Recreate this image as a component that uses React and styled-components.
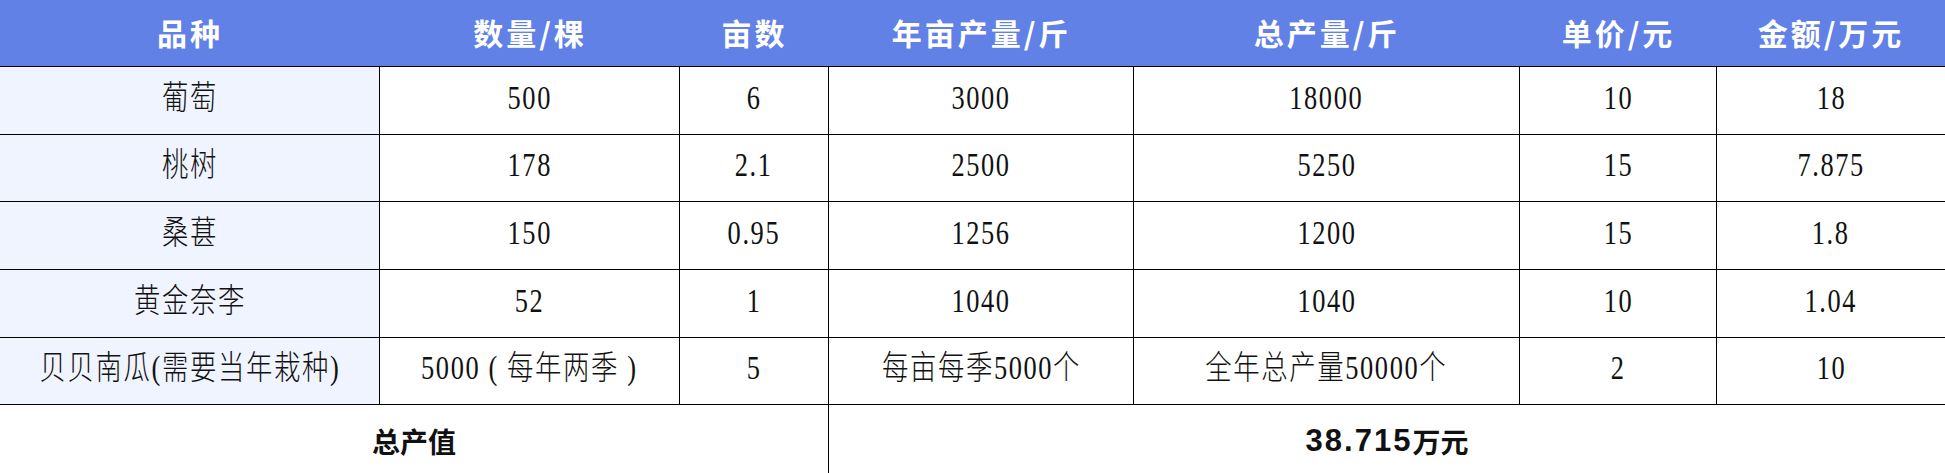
import React from "react";
import styled, { createGlobalStyle } from "styled-components";

const GlobalStyle = createGlobalStyle`
  html, body {
    margin: 0;
    padding: 0;
    background: #ffffff;
  }
`;

const headers = ["品种", "数量/棵", "亩数", "年亩产量/斤", "总产量/斤", "单价/元", "金额/万元"];

const rows = [
  ["葡萄", "500", "6", "3000", "18000", "10", "18"],
  ["桃树", "178", "2.1", "2500", "5250", "15", "7.875"],
  ["桑葚", "150", "0.95", "1256", "1200", "15", "1.8"],
  ["黄金奈李", "52", "1", "1040", "1040", "10", "1.04"],
  ["贝贝南瓜(需要当年栽种)", "5000 ( 每年两季 )", "5", "每亩每季5000个", "全年总产量50000个", "2", "10"],
];

function App() {
  return (
    <>
      <GlobalStyle />
      <Table>
        {headers.map((h) => (
          <HeadCell key={h}>{h}</HeadCell>
        ))}
        {rows.map((row, r) =>
          row.map((v, c) => (
            <Cell key={r + "-" + c} $first={c === 0} $last={c === row.length - 1}>
              <CellText>{v}</CellText>
            </Cell>
          ))
        )}
        <FootCell $span={3} $divider>
          总产值
        </FootCell>
        <FootCell $span={4}>
          <FootNumber>38.715</FootNumber>万元
        </FootCell>
      </Table>
    </>
  );
}

const Table = styled.div`
  width: 1945px;
  height: 473px;
  display: grid;
  grid-template-columns: 380px 300px 149px 305px 386px 197px 228px;
  grid-template-rows: 67px repeat(6, 1fr);
  box-sizing: border-box;
`;

const HeadCell = styled.div`
  background: #6181e7;
  color: #ffffff;
  border-bottom: 1px solid #000;
  box-sizing: border-box;
  display: flex;
  align-items: center;
  justify-content: center;
  font-family: "Noto Sans CJK SC", "Noto Sans", sans-serif;
  font-weight: 700;
  font-size: 30px;
  letter-spacing: 3px;
  padding-bottom: 2px;
`;

const Cell = styled.div`
  background: ${(p) => (p.$first ? "#f0f4fe" : "#ffffff")};
  border-bottom: 1px solid #000;
  border-right: ${(p) => (p.$last ? "none" : "1px solid #000")};
  box-sizing: border-box;
  display: flex;
  align-items: center;
  justify-content: center;
  color: #111;
`;

const CellText = styled.span`
  display: inline-block;
  font-family: "Liberation Serif", "Noto Sans CJK SC", serif;
  font-weight: 300;
  font-size: 33px;
  letter-spacing: 2px;
  transform: scaleX(0.8);
  white-space: nowrap;
  line-height: 1;
  margin-top: -4px;
`;

const FootCell = styled.div`
  grid-column: span ${(p) => p.$span};
  border-right: ${(p) => (p.$divider ? "1px solid #000" : "none")};
  box-sizing: border-box;
  display: flex;
  align-items: center;
  justify-content: center;
  font-family: "Noto Sans CJK SC", "Noto Sans", sans-serif;
  font-weight: 700;
  font-size: 28px;
  color: #111;
  padding-top: 4px;
`;

const FootNumber = styled.span`
  font-family: "Liberation Sans", "Noto Sans", sans-serif;
  font-size: 31px;
  letter-spacing: 2px;
`;

export default App;
